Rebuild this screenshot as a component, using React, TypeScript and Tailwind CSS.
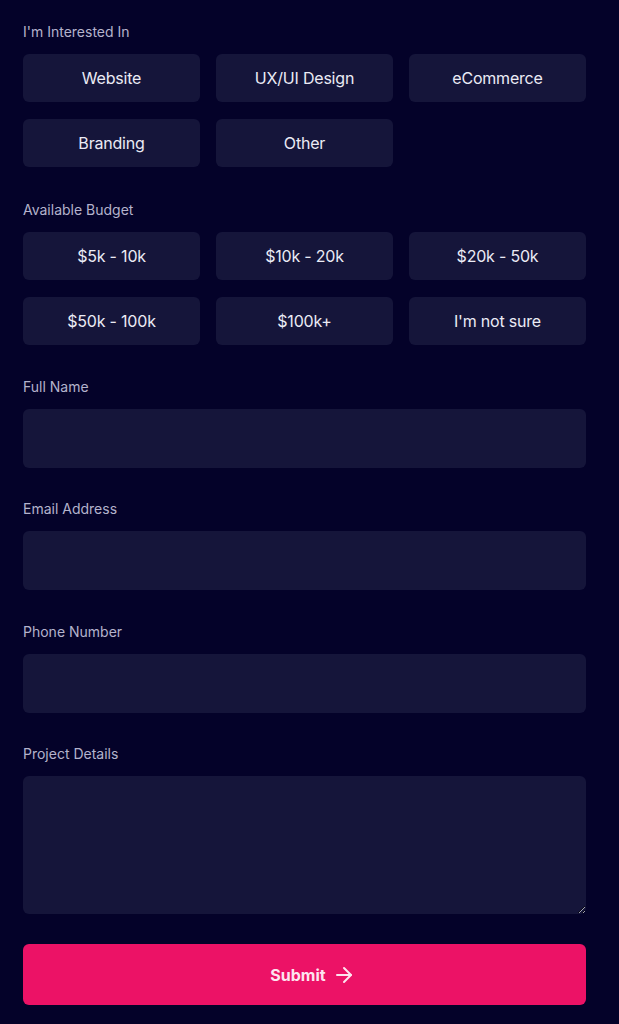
import React from "react";
import { ArrowRight } from "lucide-react";

const interests = ["Website", "UX/UI Design", "eCommerce", "Branding", "Other"];
const budgets = ["$5k - 10k", "$10k - 20k", "$20k - 50k", "$50k - 100k", "$100k+", "I'm not sure"];

function Label({ children }: { children: React.ReactNode }) {
  return <div className="text-[14px] leading-5 text-[#b4b3cc] mb-3">{children}</div>;
}

function Chips({ items }: { items: string[] }) {
  return (
    <div className="grid grid-cols-3 gap-x-4 gap-y-[17px]">
      {items.map((t) => (
        <button
          key={t}
          type="button"
          className="h-12 rounded-md bg-[#15153a] text-[16px] font-normal tracking-[-0.2px] text-[#ebebf5]"
        >
          {t}
        </button>
      ))}
    </div>
  );
}

export default function App() {
  return (
    <div
      className="min-h-[1024px] w-full bg-[#040229] px-[23px] pt-[22px] pb-4"
      style={{ fontFamily: "Inter, 'Noto Sans', sans-serif" }}
    >
      <div className="w-[563px] flex flex-col">
        <div>
          <Label>I'm Interested In</Label>
          <Chips items={interests} />
        </div>
        <div className="mt-[33px]">
          <Label>Available Budget</Label>
          <Chips items={budgets} />
        </div>
        <div className="mt-8">
          <Label>Full Name</Label>
          <input className="block w-full h-[59px] rounded-md bg-[#15153a] outline-none px-4 text-white" />
        </div>
        <div className="mt-[31px]">
          <Label>Email Address</Label>
          <input className="block w-full h-[59px] rounded-md bg-[#15153a] outline-none px-4 text-white" />
        </div>
        <div className="mt-8">
          <Label>Phone Number</Label>
          <input className="block w-full h-[59px] rounded-md bg-[#15153a] outline-none px-4 text-white" />
        </div>
        <div className="mt-[31px]">
          <Label>Project Details</Label>
          <textarea className="block w-full h-[138px] rounded-md bg-[#15153a] outline-none p-4 text-white" />
        </div>
        <button
          type="button"
          className="mt-[30px] h-[61px] w-full rounded-md bg-[#ec1266] pl-[17px] flex items-center justify-center gap-[6px] text-[16px] font-bold text-[#fde4ef]"
        >
          Submit
          <ArrowRight size={24} strokeWidth={2} />
        </button>
      </div>
    </div>
  );
}
